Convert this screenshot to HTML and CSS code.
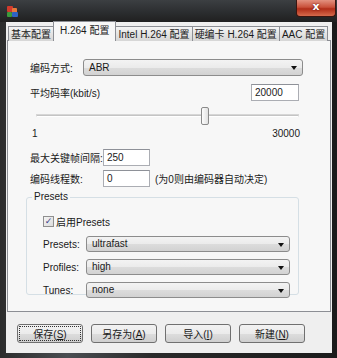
FILE: index.html
```html
<!DOCTYPE html>
<html lang="zh-CN">
<head>
    <meta charset="UTF-8">
    <title>H.264 配置</title>
    <link rel="stylesheet" href="styles.css">
</head>
<body>
    <div class="window">
        <div class="titlebar">
            <svg class="app-icon" width="13" height="13" viewBox="0 0 13 13">
                <rect x="1" y="1" width="6" height="6" rx="1" fill="#d23a2c"/>
                <rect x="6" y="3" width="5" height="5" rx="1" fill="#e87a3a"/>
                <rect x="1" y="7" width="5" height="5" rx="1" fill="#3c9a3c"/>
                <rect x="6" y="7" width="6" height="5" rx="1" fill="#2f63c4"/>
            </svg>
            <div class="close-btn">x</div>
        </div>
        <div class="client">
            <div class="tabs">
                <div class="tab">基本配置</div>
                <div class="tab active">H.264 配置</div>
                <div class="tab">Intel H.264 配置</div>
                <div class="tab">硬编卡 H.264 配置</div>
                <div class="tab">AAC 配置</div>
            </div>
            <div class="panel">
                <div class="row row-mode">
                    <span class="label">编码方式:</span>
                    <div class="select wide">ABR<span class="arrow"></span></div>
                </div>
                <div class="row row-rate">
                    <span>平均码率(kbit/s)</span>
                    <div class="input rate">20000</div>
                </div>
                <div class="slider">
                    <div class="track"></div>
                    <div class="thumb"></div>
                </div>
                <div class="scale">
                    <span>1</span>
                    <span>30000</span>
                </div>
                <div class="row row-gop">
                    <span class="label short">最大关键帧间隔:</span>
                    <div class="input small">250</div>
                </div>
                <div class="row row-threads">
                    <span class="label short">编码线程数:</span>
                    <div class="input small">0</div>
                    <span class="hint">(为0则由编码器自动决定)</span>
                </div>
                <div class="group">
                    <span class="legend">Presets</span>
                    <div class="check-row">
                        <span class="checkbox">&#10003;</span>
                        <span>启用Presets</span>
                    </div>
                    <div class="preset-row">
                        <span class="plabel">Presets:</span>
                        <div class="select preset">ultrafast<span class="arrow"></span></div>
                    </div>
                    <div class="preset-row">
                        <span class="plabel">Profiles:</span>
                        <div class="select preset">high<span class="arrow"></span></div>
                    </div>
                    <div class="preset-row">
                        <span class="plabel">Tunes:</span>
                        <div class="select preset">none<span class="arrow"></span></div>
                    </div>
                </div>
            </div>
            <div class="buttons">
                <div class="btn focused"><span>保存(<u>S</u>)</span></div>
                <div class="btn"><span>另存为(<u>A</u>)</span></div>
                <div class="btn"><span>导入(<u>I</u>)</span></div>
                <div class="btn"><span>新建(<u>N</u>)</span></div>
            </div>
        </div>
    </div>
</body>
</html>
```

FILE: styles.css
```css
body {
    margin: 0;
    background-color: #1e1e1e;
    font-family: "Liberation Sans", "Noto Sans CJK SC", sans-serif;
    font-size: 10px;
    color: #1a1a1a;
}

.window {
    width: 337px;
    height: 358px;
    display: flex;
    flex-direction: column;
    background: linear-gradient(90deg, #2c2c2c 0%, #4a4e52 20%, #2a2a2a 45%, #1b1b1b 100%);
}

.titlebar {
    height: 22px;
    display: flex;
    align-items: flex-start;
    justify-content: space-between;
    background: linear-gradient(180deg, #3c3f42 0%, #2a2c2e 60%, #202020 100%);
}

.app-icon {
    margin: 5px 0 0 6px;
}

.close-btn {
    width: 38px;
    height: 16px;
    margin-right: 1px;
    border: 1px solid #3a1510;
    border-top: none;
    border-radius: 0 0 4px 4px;
    background: linear-gradient(180deg, #e2917f 0%, #c9503a 45%, #b02d18 55%, #d66a4c 100%);
    color: #fff;
    font-family: "DejaVu Sans", sans-serif;
    font-weight: bold;
    font-size: 11px;
    line-height: 14px;
    text-align: center;
    text-shadow: 0 0 2px #500;
}

.client {
    flex: 1;
    margin: 0 5px 5px 6px;
    background-color: #efefef;
    display: flex;
    flex-direction: column;
}

.tabs {
    height: 19px;
    display: flex;
    align-items: flex-end;
    padding-left: 2px;
    position: relative;
    z-index: 1;
}

.tab {
    height: 14px;
    padding: 0 2px;
    border: 1px solid #8c8e94;
    border-bottom: none;
    margin-right: -1px;
    background: linear-gradient(180deg, #f4f4f4 0%, #e4e4e4 50%, #d6d6d6 100%);
    font-size: 10px;
    line-height: 15px;
    white-space: nowrap;
}

.tab.active {
    height: 19px;
    padding: 0 6px;
    margin: 0 -1px 0 0;
    background: #f7f7f7;
    line-height: 18px;
    z-index: 2;
}

.panel {
    margin: -1px 1px 0 1px;
    height: 270px;
    border: 1px solid #8c8e94;
    background-color: #f7f7f7;
    display: flex;
    flex-direction: column;
}

.row {
    display: flex;
    align-items: center;
    height: 17px;
    margin-left: 22px;
    white-space: nowrap;
}

.row-mode {
    margin-top: 18px;
}

.row-rate {
    margin-top: 8px;
    margin-right: 31px;
    justify-content: space-between;
}

.label {
    width: 53px;
    flex-shrink: 0;
}

.label.short {
    width: 73px;
}

.select {
    position: relative;
    height: 15px;
    border: 1px solid #8c8c8c;
    border-radius: 3px;
    background: linear-gradient(180deg, #f3f3f3 0%, #ebebeb 50%, #dcdcdc 51%, #d2d2d2 100%);
    line-height: 15px;
    padding-left: 5px;
    box-sizing: content-box;
    flex-shrink: 0;
}

.select.wide {
    width: 213px;
}

.arrow {
    position: absolute;
    right: 5px;
    top: 6px;
    border-left: 3px solid transparent;
    border-right: 3px solid transparent;
    border-top: 4px solid #111;
}

.input {
    height: 15px;
    border: 1px solid #abadb3;
    border-top-color: #8e9198;
    background-color: #fff;
    line-height: 15px;
    padding-left: 3px;
    flex-shrink: 0;
}

.input.rate {
    width: 43px;
}

.input.small {
    width: 42px;
}

.slider {
    position: relative;
    height: 17px;
    margin: 6px 31px 0 28px;
}

.track {
    position: absolute;
    left: 0;
    right: 0;
    top: 7px;
    height: 1px;
    border: 1px solid #d6d6d6;
    border-bottom-color: #fff;
    background: #c4c4c4;
}

.thumb {
    position: absolute;
    left: 165px;
    top: 0;
    width: 6px;
    height: 16px;
    border: 1px solid #8a8a8a;
    border-radius: 2px;
    background: linear-gradient(90deg, #fdfdfd, #e1e1e1);
}

.scale {
    display: flex;
    justify-content: space-between;
    margin: 4px 30px 0 24px;
    height: 12px;
    line-height: 12px;
}

.row-gop {
    margin-top: 9px;
}

.row-threads {
    margin-top: 4px;
}

.hint {
    margin-left: 5px;
}

.group {
    position: relative;
    margin: 10px 0 0 18px;
    width: 273px;
    height: 98px;
    border: 1px solid #d5dfe5;
    border-radius: 3px;
    padding-left: 16px;
    box-sizing: border-box;
}

.legend {
    position: absolute;
    left: 5px;
    top: -8px;
    padding: 0 2px;
    background-color: #f7f7f7;
    line-height: 14px;
}

.check-row {
    display: flex;
    align-items: center;
    gap: 2px;
    margin-top: 17px;
    height: 12px;
}

.checkbox {
    width: 9px;
    height: 9px;
    border: 1px solid #8f8f8f;
    background: linear-gradient(135deg, #f4f4f4, #dcdcdc);
    color: #3a3f8a;
    font-family: "DejaVu Sans", sans-serif;
    font-size: 9px;
    line-height: 9px;
    text-align: center;
    font-weight: bold;
}

.preset-row {
    display: flex;
    align-items: center;
    height: 16px;
    margin-top: 7px;
}

.check-row + .preset-row {
    margin-top: 9px;
}

.plabel {
    width: 43px;
}

.select.preset {
    height: 14px;
    line-height: 14px;
    width: 197px;
}

.buttons {
    display: flex;
    gap: 8px;
    padding-left: 11px;
    margin-top: 12px;
}

.btn {
    width: 64px;
    height: 17px;
    border: 1px solid #707070;
    border-radius: 3px;
    background: linear-gradient(180deg, #f2f2f2 0%, #ebebeb 50%, #dddddd 51%, #cfcfcf 100%);
    display: flex;
    justify-content: center;
    align-items: center;
}

.btn.focused span {
    padding: 0 10px;
}

.btn.focused {
    outline: 1px dotted #333;
    outline-offset: -3px;
}
```
